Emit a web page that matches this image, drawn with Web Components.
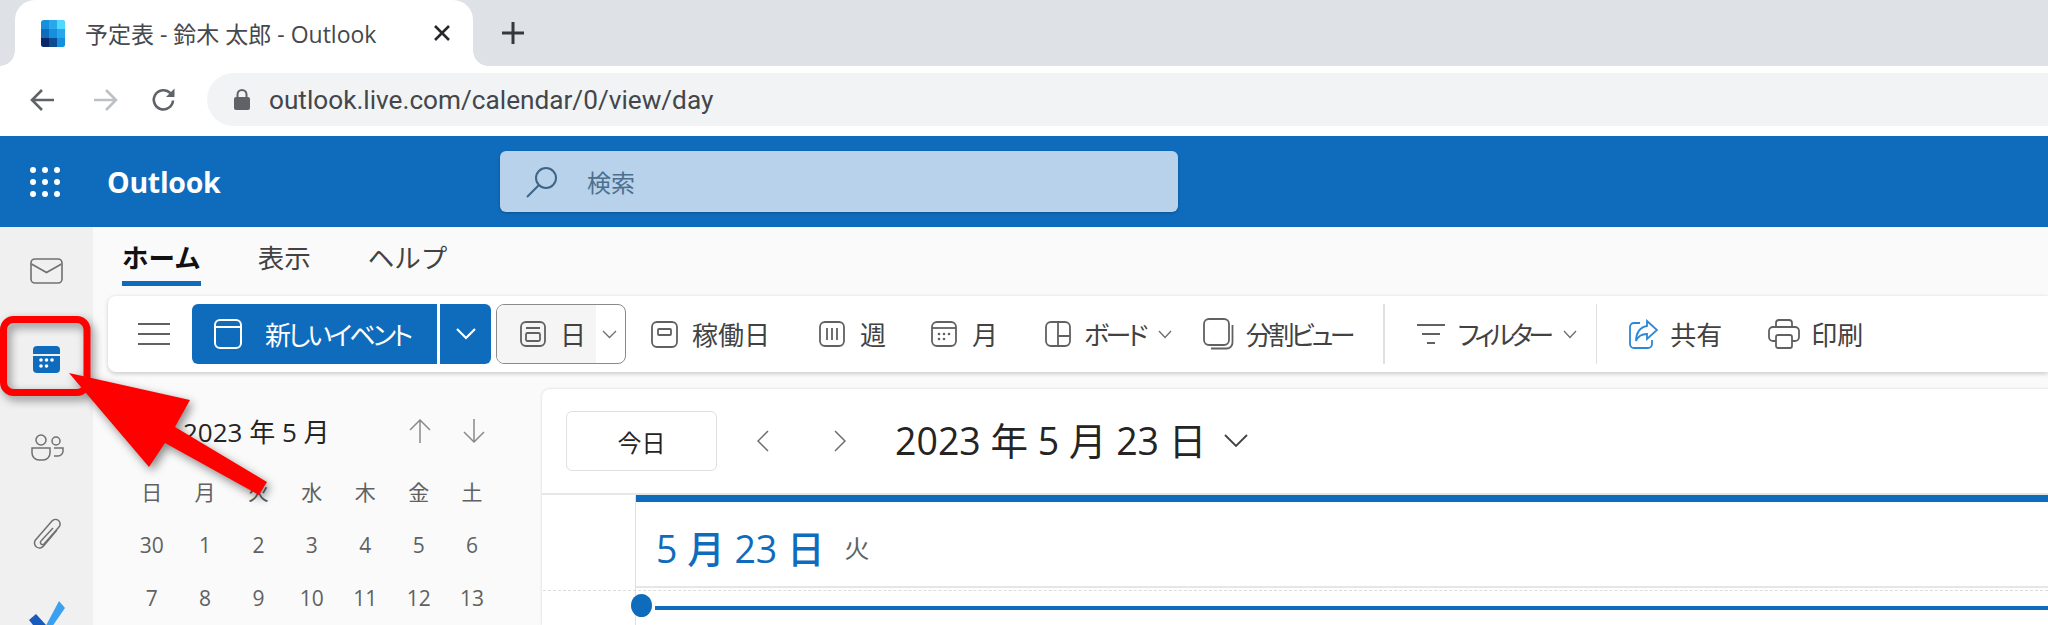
<!DOCTYPE html>
<html lang="ja">
<head>
<meta charset="utf-8">
<title>Outlook</title>
<style>
  html, body { margin: 0; height: 625px; overflow: hidden; background: #fafafa; }
  body { font-family: "Open Sans", "Noto Sans CJK JP", sans-serif; width: 2048px; position: relative; }
  .work { display: flex; height: 398px; overflow: hidden; }
  .main { flex: 1; min-width: 0; display: flex; flex-direction: column; }
  .lower { display: flex; flex: 1; min-height: 0; }
</style>
</head>
<body>
<tab-strip title-text="予定表 - 鈴木 太郎 - Outlook"></tab-strip>
<address-bar url="outlook.live.com/calendar/0/view/day"></address-bar>
<app-bar></app-bar>
<div class="work">
  <side-rail></side-rail>
  <div class="main">
    <ribbon-tabs></ribbon-tabs>
    <cal-ribbon></cal-ribbon>
    <div class="lower">
      <mini-calendar></mini-calendar>
      <day-card></day-card>
    </div>
  </div>
</div>
<red-callout></red-callout>

<script>
const FONT = `"Open Sans", "Noto Sans CJK JP", sans-serif`;

class TabStrip extends HTMLElement {
  constructor() {
    super();
    this.attachShadow({ mode: "open" });
    this.shadowRoot.innerHTML = `
    <style>
      :host { display: flex; align-items: flex-end; height: 66px; background: #dee1e6; padding-left: 15px; font-family: ${FONT}; }
      .tab { position: relative; width: 458px; height: 66px; background: #fff; border-radius: 20px 20px 0 0; display: flex; align-items: center; box-sizing: border-box; padding: 0 0 0 26px; }
      .tab::before, .tab::after { content: ""; position: absolute; bottom: 0; width: 15px; height: 15px; }
      .tab::before { left: -15px; background: radial-gradient(circle at 0 0, #dee1e6 14.5px, #fff 15px); }
      .tab::after { right: -15px; background: radial-gradient(circle at 100% 0, #dee1e6 14.5px, #fff 15px); }
      .title { margin-left: 20px; font-size: 23px; color: #45484c; width: 326px; white-space: nowrap; }
      .close { margin-left: 22px; }
      .plus { margin: 0 0 0 29px; align-self: center; }
    </style>
    <div class="tab">
      <svg width="24" height="27" viewBox="0 0 24 27" style="border-radius:3px">
        <rect width="24" height="27" fill="#1490df"/>
        <rect x="8" width="8" height="9" fill="#28a8ea"/><rect x="16" width="8" height="9" fill="#50d9ff"/>
        <rect y="9" width="8" height="9" fill="#0f6cbd"/><rect x="8" y="9" width="8" height="9" fill="#1490df"/><rect x="16" y="9" width="8" height="9" fill="#28a8ea"/>
        <rect y="18" width="8" height="9" fill="#0a2767"/><rect x="8" y="18" width="8" height="9" fill="#0f4c8f"/><rect x="16" y="18" width="8" height="9" fill="#1490df"/>
      </svg>
      <span class="title">${this.getAttribute("title-text")}</span>
      <svg class="close" width="18" height="18" viewBox="0 0 18 18"><path d="M2 2 16 16M16 2 2 16" stroke="#26282b" stroke-width="2.6" fill="none"/></svg>
    </div>
    <svg class="plus" width="22" height="22" viewBox="0 0 22 22"><path d="M11 0V22M0 11H22" stroke="#35383c" stroke-width="3" fill="none"/></svg>`;
  }
}

class AddressBar extends HTMLElement {
  constructor() {
    super();
    this.attachShadow({ mode: "open" });
    this.shadowRoot.innerHTML = `
    <style>
      :host { display: flex; align-items: center; height: 70px; background: #fff; box-sizing: border-box; padding: 0 0 3px 29px; font-family: ${FONT}; }
      .btn { width: 26px; height: 26px; display: block; }
      .omni { flex: 1; margin-left: 30px; height: 53px; background: #f1f3f4; border-radius: 27px 0 0 27px; display: flex; align-items: center; padding-left: 27px; }
      .url { margin-left: 19px; font-size: 26.2px; color: #43464a; white-space: nowrap; font-family: Roboto, sans-serif; }
    </style>
    <svg class="btn" viewBox="0 0 26 26"><path d="M25 13H3M13 3 3 13 13 23" fill="none" stroke="#5f6368" stroke-width="2.6"/></svg>
    <svg class="btn" style="margin-left:38px" viewBox="0 0 26 26"><path d="M1 13H23M13 3 23 13 13 23" fill="none" stroke="#bdc1c6" stroke-width="2.6"/></svg>
    <svg class="btn" style="margin-left:32px" viewBox="0 0 26 26"><path d="M22 13.5A9.6 9.6 0 1 1 19.4 6.2" fill="none" stroke="#5f6368" stroke-width="2.6"/><path d="M23.5 1.5V10H15Z" fill="#5f6368"/></svg>
    <div class="omni">
      <svg width="16" height="21" viewBox="0 0 16 21"><rect y="8" width="16" height="13" rx="2" fill="#5f6368"/><path d="M3.5 9V5.5a4.5 4.5 0 0 1 9 0V9" fill="none" stroke="#5f6368" stroke-width="2"/></svg>
      <span class="url">${this.getAttribute("url")}</span>
    </div>`;
  }
}

class AppBar extends HTMLElement {
  constructor() {
    super();
    this.attachShadow({ mode: "open" });
    let dots = "";
    for (const y of [3, 15, 27]) for (const x of [3, 15, 27]) dots += `<circle cx="${x}" cy="${y}" r="3" fill="#fff"/>`;
    this.shadowRoot.innerHTML = `
    <style>
      :host { display: flex; align-items: center; height: 91px; background: #0f6cbd; box-sizing: border-box; padding-left: 30px; font-family: ${FONT}; }
      .name { margin-left: 47px; width: 393px; color: #fff; font: 700 28.5px "Open Sans", sans-serif; letter-spacing: -.3px; }
      .search { width: 678px; height: 61px; background: #b7d2ea; border-radius: 6px; display: flex; align-items: center; padding-left: 26px; box-sizing: border-box; box-shadow: 0 1px 3px rgba(0,0,0,.25); }
      .search span { margin-left: 28px; font-size: 24px; color: #4c6f8e; }
    </style>
    <svg width="30" height="30" viewBox="0 0 30 30">${dots}</svg>
    <div class="name">Outlook</div>
    <div class="search">
      <svg width="33" height="33" viewBox="0 0 33 33"><circle cx="20" cy="13" r="10" fill="none" stroke="#3f6485" stroke-width="2"/><path d="M13 20 1 32" stroke="#3f6485" stroke-width="2"/></svg>
      <span>検索</span>
    </div>`;
  }
}

class SideRail extends HTMLElement {
  constructor() {
    super();
    this.attachShadow({ mode: "open" });
    this.shadowRoot.innerHTML = `
    <style>
      :host { display: flex; flex-direction: column; width: 93px; flex: none; background: #f0f0f0; overflow: hidden; }
      div { height: 88px; flex: none; display: flex; align-items: center; justify-content: center; }
      svg { display: block; }
    </style>
    <div><svg width="33" height="26" viewBox="0 0 33 26"><rect x="1" y="1" width="31" height="24" rx="4" fill="none" stroke="#707070" stroke-width="1.6"/><path d="M1.5 6 16.5 14.5 31.5 6" fill="none" stroke="#707070" stroke-width="1.6"/></svg></div>
    <div><svg width="27" height="27" viewBox="0 0 27 27"><path d="M0 8V4a4 4 0 0 1 4-4H23a4 4 0 0 1 4 4V8Z" fill="#0f6cbd"/><path d="M0 10H27V23a4 4 0 0 1-4 4H4a4 4 0 0 1-4-4Z" fill="#0f6cbd"/><g fill="#fff"><circle cx="8" cy="14" r="1.8"/><circle cx="13.5" cy="14" r="1.8"/><circle cx="19" cy="14" r="1.8"/><circle cx="8" cy="20" r="1.8"/><circle cx="13.5" cy="20" r="1.8"/></g></svg></div>
    <div><svg width="34" height="27" viewBox="0 0 34 27" fill="none" stroke="#707070" stroke-width="1.5"><circle cx="11" cy="6" r="5"/><circle cx="26" cy="7" r="4"/><path d="M2 14H20V19a7 7 0 0 1-7 7H9a7 7 0 0 1-7-7Z"/><path d="M24 14H33V17a5 5 0 0 1-5 5H24"/></svg></div>
    <div><svg width="28" height="34" viewBox="0 0 28 34" fill="none" stroke="#707070" stroke-width="1.5"><path d="M24 12 10.5 28a5 5 0 0 1-8-6L19 3a4.5 4.5 0 0 1 7 6L11 26a2 2 0 0 1-3-3L20 10"/></svg></div>
    <div style="align-items:flex-start;padding-top:22px;box-sizing:border-box"><svg width="38" height="36" viewBox="0 0 38 36"><path d="M1 19 8 13 18 24 13 34Z" fill="#185abd"/><path d="M13 34 31 0 37 7 17 36Z" fill="#3aa0f0"/></svg></div>`;
  }
}

class RibbonTabs extends HTMLElement {
  constructor() {
    super();
    this.attachShadow({ mode: "open" });
    this.shadowRoot.innerHTML = `
    <style>
      :host { display: flex; height: 69px; box-sizing: border-box; padding: 11px 0 0 29px; gap: 57px; font-family: ${FONT}; font-size: 26.5px; color: #424242; }
      span { height: 48px; line-height: 40px; box-sizing: border-box; }
      .on { font-weight: 700; color: #111; border-bottom: 5px solid #0f6cbd; height: 48px; }
    </style>
    <span class="on">ホーム</span><span>表示</span><span>ヘルプ</span>`;
  }
}

class RibbonItem extends HTMLElement {
  constructor() {
    super();
    this.attachShadow({ mode: "open" });
    this.shadowRoot.innerHTML = `
    <style>
      :host { display: flex; align-items: center; gap: 14px; font-size: 26px; font-feature-settings: "palt"; color: #424242; white-space: nowrap; flex: none; }
      ::slotted(svg) { display: block; }
      .caret { display: none; }
      :host([caret]) .caret { display: block; }
    </style>
    <slot name="icon"></slot><slot></slot>
    <svg class="caret" width="14" height="9" viewBox="0 0 14 9"><path d="M1 1 7 7.5 13 1" fill="none" stroke="#6d6d6d" stroke-width="1.3"/></svg>`;
  }
}
customElements.define("ribbon-item", RibbonItem);

const ico = `fill="none" stroke="#616161" stroke-width="1.8"`;

class CalRibbon extends HTMLElement {
  constructor() {
    super();
    this.attachShadow({ mode: "open" });
    this.shadowRoot.innerHTML = `
    <style>
      :host { display: flex; align-items: center; height: 76px; flex: none; margin-left: 15px; background: #fff; border-radius: 8px 0 0 8px; box-shadow: 0 1.5px 4px rgba(0,0,0,.18); font-family: ${FONT}; }
      .burger { margin-left: 30px; margin-right: 22px; display: block; }
      .new { display: flex; align-items: center; width: 245px; height: 60px; background: #0f6cbd; color: #fff; border-radius: 6px 0 0 6px; font-size: 26px; font-feature-settings: "palt"; letter-spacing: -2.8px; box-sizing: border-box; padding-left: 22px; gap: 23px; white-space: nowrap; }
      .drop { display: flex; align-items: center; justify-content: center; width: 51px; height: 60px; margin-left: 3px; background: #0f6cbd; border-radius: 0 6px 6px 0; }
      .day { display: flex; align-items: center; width: 130px; height: 60px; margin-left: 5px; border: 1.5px solid #8a8a8a; border-radius: 8px; box-sizing: border-box; overflow: hidden; font-size: 26px; color: #424242; background: #fff; }
      .day .fill { display: flex; align-items: center; gap: 14px; width: 99px; height: 100%; background: #f5f5f5; box-sizing: border-box; padding-left: 23px; }
      .day svg.c { margin-left: 6px; }
      .sep { width: 1.5px; height: 60px; background: #e0e0e0; flex: none; }
    </style>
    <svg class="burger" width="32" height="24" viewBox="0 0 32 24"><path d="M0 2H32M0 12H32M0 22H32" stroke="#616161" stroke-width="2"/></svg>
    <div class="new">
      <svg width="28" height="30" viewBox="0 0 28 30" fill="none" stroke="#fff" stroke-width="2"><rect x="1" y="1" width="26" height="28" rx="5"/><path d="M1 8H27"/></svg>
      <span>新しいイベント</span>
    </div>
    <div class="drop"><svg width="20" height="12" viewBox="0 0 20 12"><path d="M1 1 10 10 19 1" fill="none" stroke="#fff" stroke-width="2.2"/></svg></div>
    <div class="day">
      <div class="fill">
        <svg width="26" height="26" viewBox="0 0 26 26" ${ico}><rect x="1" y="1" width="24" height="24" rx="5"/><path d="M6 7H20"/><rect x="6" y="12" width="14" height="8" rx="1.5"/></svg>
        <span>日</span>
      </div>
      <svg class="c" width="15" height="9" viewBox="0 0 15 9"><path d="M1 1 7.5 7.5 14 1" fill="none" stroke="#6d6d6d" stroke-width="1.3"/></svg>
    </div>
    <ribbon-item style="margin-left:25px">
      <svg slot="icon" width="27" height="27" viewBox="0 0 27 27" ${ico}><rect x="1" y="1" width="25" height="25" rx="5"/><rect x="7" y="8" width="13" height="6" rx="1"/></svg>稼働日</ribbon-item>
    <ribbon-item style="margin-left:49px;gap:15px">
      <svg slot="icon" width="26" height="26" viewBox="0 0 26 26" ${ico}><rect x="1" y="1" width="24" height="24" rx="5"/><path d="M8 7V19M13 7V19M18 7V19"/></svg>週</ribbon-item>
    <ribbon-item style="margin-left:45px;gap:15px">
      <svg slot="icon" width="26" height="26" viewBox="0 0 26 26" ${ico}><rect x="1" y="1" width="24" height="24" rx="5"/><path d="M1 7H25"/><g fill="#616161" stroke="none"><circle cx="8" cy="13" r="1.3"/><circle cx="13" cy="13" r="1.3"/><circle cx="18" cy="13" r="1.3"/><circle cx="8" cy="18" r="1.3"/><circle cx="13" cy="18" r="1.3"/></g></svg>月</ribbon-item>
    <ribbon-item caret style="margin-left:47px;gap:13px;letter-spacing:-3.5px">
      <svg slot="icon" width="26" height="26" viewBox="0 0 26 26" ${ico}><rect x="1" y="1" width="24" height="24" rx="5"/><path d="M13 1V25M13 15H25"/></svg>ボード</ribbon-item>
    <ribbon-item style="margin-left:31px;gap:12px;letter-spacing:-3.4px">
      <svg slot="icon" width="31" height="32" viewBox="0 0 31 32" ${ico}><rect x="1" y="1" width="25" height="26" rx="5"/><path d="M29.5 7V24a6 6 0 0 1-6 6.5H8"/></svg>分割ビュー</ribbon-item>
    <div class="sep" style="margin-left:31px"></div>
    <ribbon-item caret style="margin-left:32px;gap:13px;letter-spacing:-4.4px">
      <svg slot="icon" width="28" height="22" viewBox="0 0 28 22" ${ico}><path d="M0 2H28M5 11H23M10 20H18"/></svg>フィルター</ribbon-item>
    <div class="sep" style="margin-left:19px"></div>
    <ribbon-item style="margin-left:31px;gap:12px">
      <svg slot="icon" width="30" height="30" viewBox="0 0 30 30" fill="none" stroke="#2b88d8" stroke-width="1.8"><path d="M12 4H6a4 4 0 0 0-4 4V25a4 4 0 0 0 4 4H20a4 4 0 0 0 4-4V21"/><path d="M19 2 29 11 19 20V15C13 15 10 17 8 22 8 14 12 8 19 7Z"/></svg>共有</ribbon-item>
    <ribbon-item style="margin-left:46px;gap:11px">
      <svg slot="icon" width="32" height="30" viewBox="0 0 32 30" ${ico}><path d="M8 8V4a3 3 0 0 1 3-3H21a3 3 0 0 1 3 3V8"/><path d="M8 22H5a4 4 0 0 1-4-4V12a4 4 0 0 1 4-4H27a4 4 0 0 1 4 4V18a4 4 0 0 1-4 4H24"/><rect x="8" y="16" width="16" height="13" rx="2"/></svg>印刷</ribbon-item>`;
  }
}

class MiniCalendar extends HTMLElement {
  constructor() {
    super();
    this.attachShadow({ mode: "open" });
    const heads = ["日", "月", "火", "水", "木", "金", "土"];
    const nums = [30, 1, 2, 3, 4, 5, 6, 7, 8, 9, 10, 11, 12, 13];
    this.shadowRoot.innerHTML = `
    <style>
      :host { display: block; width: 449px; flex: none; box-sizing: border-box; padding: 42px 0 0 32px; font-family: ${FONT}; }
      .head { display: flex; align-items: center; height: 34px; font-size: 26px; color: #242424; padding-left: 58px; }
      .head span { width: 226px; white-space: nowrap; }
      .head svg { display: block; }
      .grid { display: grid; grid-template-columns: repeat(7, 53.4px); grid-auto-rows: 53px; margin-top: 18px; font-size: 21px; color: #616161; text-align: center; line-height: 53px; }
    </style>
    <div class="head">
      <span>2023 年 5 月</span>
      <svg width="22" height="24" viewBox="0 0 22 24"><path d="M11 24V1M1 11 11 1 21 11" fill="none" stroke="#8a8a8a" stroke-width="1.5"/></svg>
      <svg style="margin-left:32px" width="22" height="24" viewBox="0 0 22 24"><path d="M11 0V23M1 13 11 23 21 13" fill="none" stroke="#8a8a8a" stroke-width="1.5"/></svg>
    </div>
    <div class="grid">${heads.concat(nums).map(d => `<div>${d}</div>`).join("")}</div>`;
  }
}

class DayCard extends HTMLElement {
  constructor() {
    super();
    this.attachShadow({ mode: "open" });
    this.shadowRoot.innerHTML = `
    <style>
      :host { display: flex; flex-direction: column; flex: 1; min-width: 0; margin-top: 17px; background: #fff; border-top-left-radius: 8px; box-shadow: 0 0 3px rgba(0,0,0,.16); font-family: ${FONT}; position: relative; overflow: hidden; }
      .bar { display: flex; align-items: center; height: 106px; flex: none; padding-left: 24px; border-bottom: 2px solid #e6e6e6; box-sizing: border-box; }
      .today { width: 151px; height: 60px; border: 1.5px solid #e0e0e0; border-radius: 6px; box-sizing: border-box; display: flex; align-items: center; justify-content: center; font-size: 24px; color: #242424; }
      .title { font-size: 37.5px; color: #242424; margin: 0 0 6px 49px; white-space: nowrap; }
      .body { flex: 1; margin-left: 93px; border-left: 1.5px solid #e1e1e1; }
      .top { height: 7px; background: #0f6cbd; }
      .date { height: 86px; box-sizing: border-box; border-bottom: 2px solid #e6e6e6; display: flex; align-items: center; padding: 5px 0 0 20px; color: #0f6cbd; font-size: 37.5px; font-weight: 500; white-space: nowrap; }
      .date small { font-size: 25px; font-weight: 400; color: #616161; margin-left: 20px; }
      .dash { margin-top: 2px; border-top: 1.5px dashed #dcdcdc; margin-left: -93px; }
      .dot { position: absolute; left: 89px; top: 205px; width: 21px; height: 23px; border-radius: 50%; background: #0f6cbd; }
      .now { position: absolute; left: 113px; right: 0; top: 217px; height: 4px; background: #0f6cbd; }
    </style>
    <div class="bar">
      <div class="today">今日</div>
      <svg style="margin-left:40px" width="12" height="22" viewBox="0 0 12 22"><path d="M11 1 1 11 11 21" fill="none" stroke="#6d6d6d" stroke-width="1.5"/></svg>
      <svg style="margin-left:65px" width="12" height="22" viewBox="0 0 12 22"><path d="M1 1 11 11 1 21" fill="none" stroke="#6d6d6d" stroke-width="1.5"/></svg>
      <div class="title">2023 年 5 月 23 日</div>
      <svg style="margin-left:18px" width="24" height="14" viewBox="0 0 24 14"><path d="M1 1 12 12 23 1" fill="none" stroke="#424242" stroke-width="1.8"/></svg>
    </div>
    <div class="body">
      <div class="top"></div>
      <div class="date"><span>5 月 23 日</span><small>火</small></div>
      <div class="dash"></div>
    </div>
    <div class="dot"></div>
    <div class="now"></div>`;
  }
}

// red rectangle and arrow laid over the screenshot
class RedCallout extends HTMLElement {
  constructor() {
    super();
    this.attachShadow({ mode: "open" });
    this.shadowRoot.innerHTML = `
    <style>
      :host { position: absolute; left: 0; top: 0; width: 300px; height: 520px; pointer-events: none; }
      svg { position: absolute; left: 0; top: 0; }
      .shadow { filter: drop-shadow(3px 4px 5px rgba(0,0,0,.45)); }
    </style>
    <svg width="300" height="520" viewBox="0 0 300 520">
      <g class="shadow">
        <rect x="3.5" y="319.5" width="83.5" height="73" rx="10" fill="none" stroke="#f00" stroke-width="7"/>
        <path d="M69 373 190 400 175 427 267 482 259 495 165 443 149 467Z" fill="#f00"/>
      </g>
    </svg>`;
  }
}

customElements.define("tab-strip", TabStrip);
customElements.define("address-bar", AddressBar);
customElements.define("app-bar", AppBar);
customElements.define("side-rail", SideRail);
customElements.define("ribbon-tabs", RibbonTabs);
customElements.define("cal-ribbon", CalRibbon);
customElements.define("mini-calendar", MiniCalendar);
customElements.define("day-card", DayCard);
customElements.define("red-callout", RedCallout);
</script>
</body>
</html>
